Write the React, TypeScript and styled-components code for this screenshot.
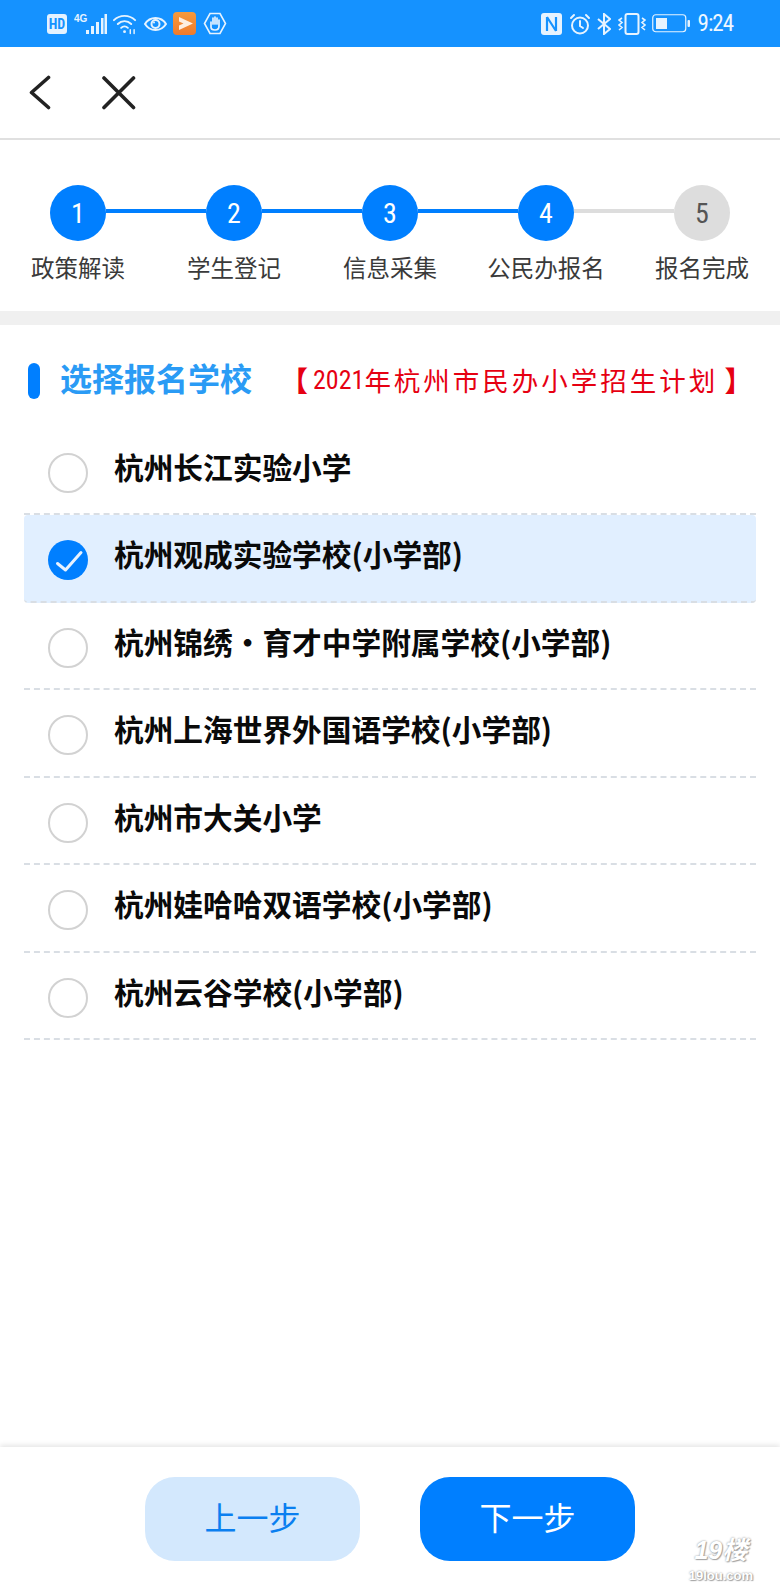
import React, { useState } from 'react';
import styled, { createGlobalStyle } from 'styled-components';

const CJK = `"Noto Sans CJK SC", "Liberation Sans", sans-serif`;
const NARROW = `"Liberation Sans Narrow", "Roboto Condensed", Roboto, sans-serif`;

const GlobalStyle = createGlobalStyle`
  html, body {
    margin: 0;
    padding: 0;
    background: #fff;
  }
`;

const Page = styled.div`
  position: relative;
  width: 780px;
  height: 1591px;
  display: flex;
  flex-direction: column;
  overflow: hidden;
  background: #fff;
  font-family: ${CJK};
`;

const StatusBar = styled.div`
  height: 47px;
  flex: none;
  padding: 0 47px;
  box-sizing: border-box;
  background: #1592ff;
  color: #e6f3ff;
  display: flex;
  align-items: center;
  justify-content: space-between;
`;

const StatusGroup = styled.div`
  display: flex;
  align-items: center;
  gap: 6.5px;
`;

const HdBadge = styled.span`
  width: 20px;
  height: 20px;
  border-radius: 3px;
  background: #e3f2ff;
  color: #1592ff;
  font: bold 14px ${NARROW};
  display: flex;
  align-items: center;
  justify-content: center;
`;

const Clock = styled.span`
  font: 23px ${NARROW};
  letter-spacing: -1px;
  color: #eef7ff;
  margin-left: 1px;
`;

const NavBar = styled.div`
  height: 91px;
  flex: none;
  padding-left: 29px;
  border-bottom: 2px solid #e0e0e0;
  display: flex;
  align-items: center;
  gap: 50px;
`;

const IconButton = styled.button`
  padding: 0;
  border: 0;
  background: none;
  display: flex;
`;

const Stepper = styled.div`
  flex: none;
  padding: 45px 0 27px;
  border-bottom: 14px solid #f0f0f0;
`;

const Track = styled.div`
  padding: 0 50px;
  display: flex;
  align-items: center;
`;

const Dot = styled.div<{ $done: boolean }>`
  width: 56px;
  height: 56px;
  flex: none;
  border-radius: 50%;
  background: ${(p) => (p.$done ? '#007fff' : '#dddddd')};
  color: ${(p) => (p.$done ? '#fff' : '#555')};
  font: 28px ${NARROW};
  display: flex;
  align-items: center;
  justify-content: center;
`;

const Line = styled.div<{ $done: boolean }>`
  flex: 1;
  height: 4px;
  margin-bottom: 4px;
  background: ${(p) => (p.$done ? '#007fff' : '#dddddd')};
`;

const Labels = styled.div`
  margin-top: 9px;
  display: grid;
  grid-template-columns: repeat(5, 156px);
`;

const StepLabel = styled.div`
  font-size: 23.5px;
  line-height: 34px;
  color: #3a3a3a;
  text-align: center;
`;

const SectionHead = styled.div`
  margin: 38px 0 0 28px;
  height: 36px;
  display: flex;
  align-items: center;
`;

const Marker = styled.span`
  width: 12px;
  height: 36px;
  border-radius: 6px;
  background: #007fff;
`;

const Title = styled.h2`
  margin: 0 0 9px 20px;
  font-size: 32px;
  font-weight: 700;
  color: #2a9bf5;
  white-space: nowrap;
`;

const PlanLink = styled.span`
  margin: 0 0 3px 28px;
  display: flex;
  align-items: center;
  font-size: 26.5px;
  letter-spacing: 3px;
  color: #e60012;
  white-space: nowrap;
`;

const Bracket = styled.span<{ $closing?: boolean }>`
  font-size: 28px;
  font-weight: 700;
  letter-spacing: 0;
  margin: ${(p) => (p.$closing ? '0 0 0 6px' : '0 5px 0 0')};
`;

const Digits = styled.span`
  font: 26px ${NARROW};
  letter-spacing: 0;
`;

const SchoolList = styled.div`
  margin: 28.5px 24px 0;
`;

const SchoolRow = styled.div<{ $selected: boolean }>`
  height: 87.5px;
  box-sizing: border-box;
  padding: 19px 0 0 24px;
  border-bottom: 2px dashed #d9dee4;
  border-radius: ${(p) => (p.$selected ? '4px' : '0')};
  background: ${(p) => (p.$selected ? '#e1efff' : 'transparent')};
  display: flex;
  align-items: flex-start;
  gap: 26px;
`;

const Radio = styled.span`
  width: 40px;
  height: 40px;
  margin-top: 6px;
  flex: none;
  box-sizing: border-box;
  border: 2px solid #d2d2d2;
  border-radius: 50%;
  background: #fff;
`;

const Checked = styled.span`
  width: 40px;
  height: 40px;
  margin-top: 6px;
  flex: none;
  display: flex;
`;

const SchoolName = styled.span`
  font-size: 29.7px;
  line-height: 40px;
  font-weight: 700;
  color: #0a0a0a;
`;

const Footer = styled.div`
  margin-top: auto;
  height: 144px;
  flex: none;
  box-sizing: border-box;
  padding-top: 30px;
  box-shadow: 0 -2px 5px rgba(0, 0, 0, 0.1);
  display: flex;
  justify-content: center;
  gap: 60px;
`;

const StepButton = styled.button<{ $primary?: boolean }>`
  width: 215px;
  height: 84px;
  padding: 0 0 6px;
  border: 0;
  border-radius: 30px;
  background: ${(p) => (p.$primary ? '#007fff' : '#d3e8fd')};
  color: ${(p) => (p.$primary ? '#fff' : '#0a7ff0')};
  font-family: ${CJK};
  font-size: 32px;
`;

const Watermark = styled.div`
  position: absolute;
  right: 27px;
  bottom: 8px;
  color: #fff;
  text-align: center;
  text-shadow: 0 0 2px #8a8a8a, 1px 1px 1px #aaa;
`;

const MarkLogo = styled.div`
  font: italic bold 25px/36px "Liberation Sans", ${CJK};
`;

const MarkSite = styled.div`
  font: bold 13px/15px "Liberation Sans", sans-serif;
`;

const steps = ['政策解读', '学生登记', '信息采集', '公民办报名', '报名完成'];
const schools = [
  '杭州长江实验小学',
  '杭州观成实验学校(小学部)',
  '杭州锦绣・育才中学附属学校(小学部)',
  '杭州上海世界外国语学校(小学部)',
  '杭州市大关小学',
  '杭州娃哈哈双语学校(小学部)',
  '杭州云谷学校(小学部)',
];
const CURRENT_STEP = 4;

const SignalIcon = () => (
  <svg width="33" height="22" viewBox="0 0 33 22" fill="currentColor">
    <text x="0" y="9" fontSize="10" fontWeight="700" fontFamily="Liberation Sans">4G</text>
    <rect x="12" y="17" width="3" height="4" />
    <rect x="17" y="13" width="3" height="8" />
    <rect x="22" y="9" width="3" height="12" />
    <rect x="27" y="5" width="2.5" height="16" />
    <rect x="30.5" y="1" width="2.5" height="20" />
  </svg>
);

const WifiIcon = () => (
  <svg width="24" height="22" viewBox="0 0 25 22" fill="none" stroke="currentColor" strokeWidth="2" strokeLinecap="round">
    <path d="M1 7C7 1 17 1 23 7" />
    <path d="M5 11C9 7 15 7 19 11" />
    <path d="M8.5 15C10.5 13 13.5 13 15.5 15" />
    <circle cx="12" cy="19" r="1.5" fill="currentColor" stroke="none" />
    <path d="M18 17V21M22 17V21" strokeWidth="1.5" />
  </svg>
);

const EyeIcon = () => (
  <svg width="23" height="18" viewBox="0 0 23 18" fill="none" stroke="currentColor" strokeWidth="2">
    <path d="M1 9C6 1 17 1 22 9C17 17 6 17 1 9Z" />
    <circle cx="11.5" cy="9" r="4" />
    <circle cx="10" cy="7.5" r="1" fill="currentColor" stroke="none" />
  </svg>
);

const AppIcon = () => (
  <svg width="23" height="23" viewBox="0 0 23 23">
    <defs>
      <linearGradient id="appFill" x1="0" y1="0" x2="0" y2="1">
        <stop offset="0" stopColor="#f79a3c" />
        <stop offset="1" stopColor="#ee7a2c" />
      </linearGradient>
    </defs>
    <rect width="23" height="23" rx="4" fill="url(#appFill)" />
    <path d="M6 5L20 11.5L6 18V13.5L10.5 11.5L6 9.5Z" fill="#fdeee0" />
  </svg>
);

const HandIcon = () => (
  <svg width="24" height="23" viewBox="0 0 24 23" fill="none" stroke="currentColor">
    <path d="M7 1.5H17L22.5 11.5L17 21.5H7L1.5 11.5Z" strokeWidth="1.6" />
    <path d="M8 10V15C8 17 10 18 12 18C15 18 16 16 16 14V8M10 12V6M12 12V5M14 12V6" strokeWidth="1.7" strokeLinecap="round" />
  </svg>
);

const NfcIcon = () => (
  <svg width="21" height="22" viewBox="0 0 21 22">
    <rect width="21" height="22" rx="3" fill="currentColor" />
    <path d="M6 4V18M15 4V18M6 4L15 18" stroke="#1592ff" strokeWidth="2.2" fill="none" />
  </svg>
);

const AlarmIcon = () => (
  <svg width="22" height="22" viewBox="0 0 22 22" fill="none" stroke="currentColor" strokeWidth="2" strokeLinecap="round">
    <circle cx="11" cy="12.5" r="8" />
    <path d="M11 8V13L14 15M2 5L5 2M20 5L17 2" />
  </svg>
);

const BluetoothIcon = () => (
  <svg width="14" height="22" viewBox="0 0 14 22" fill="none" stroke="currentColor" strokeWidth="2">
    <path d="M1 6L13 16L7 21V1L13 6L1 16" />
  </svg>
);

const VibrateIcon = () => (
  <svg width="28" height="22" viewBox="0 0 28 22" fill="none" stroke="currentColor" strokeWidth="1.6">
    <rect x="7.5" y="1" width="13" height="20" rx="2" strokeWidth="2" />
    <path d="M4 5L1 7L4 9.5L1 12L4 14.5L1 17M24 5L27 7L24 9.5L27 12L24 14.5L27 17" />
  </svg>
);

const BatteryIcon = () => (
  <svg width="38" height="19" viewBox="0 0 38 19">
    <rect x="0.75" y="0.75" width="33" height="17" rx="3" fill="none" stroke="currentColor" strokeWidth="1.2" />
    <rect x="4" y="4" width="11" height="11" fill="currentColor" />
    <rect x="35.5" y="6" width="2.5" height="7" rx="1" fill="currentColor" />
  </svg>
);

const BackIcon = () => (
  <svg width="22" height="35" viewBox="0 0 22 35" fill="none" stroke="#222" strokeWidth="3.6" strokeLinecap="round" strokeLinejoin="round">
    <path d="M19.5 2.5L2.5 17.5L19.5 32.5" />
  </svg>
);

const CloseIcon = () => (
  <svg width="35" height="35" viewBox="0 0 35 35" fill="none" stroke="#222" strokeWidth="3.6" strokeLinecap="round">
    <path d="M3 3L32.5 32.5M32.5 3L3 32.5" />
  </svg>
);

const CheckIcon = () => (
  <svg width="40" height="40" viewBox="0 0 40 40">
    <circle cx="20" cy="20" r="20" fill="#007fff" />
    <path d="M9.5 23.5L17.5 30L33 12.5" fill="none" stroke="#e8f2ff" strokeWidth="3" strokeLinecap="round" strokeLinejoin="round" />
  </svg>
);

const App = () => {
  const [selected, setSelected] = useState(1);

  return (
    <Page>
      <GlobalStyle />
      <StatusBar>
        <StatusGroup>
          <HdBadge>HD</HdBadge>
          <SignalIcon />
          <WifiIcon />
          <EyeIcon />
          <AppIcon />
          <HandIcon />
        </StatusGroup>
        <StatusGroup>
          <NfcIcon />
          <AlarmIcon />
          <BluetoothIcon />
          <VibrateIcon />
          <BatteryIcon />
          <Clock>9:24</Clock>
        </StatusGroup>
      </StatusBar>

      <NavBar>
        <IconButton><BackIcon /></IconButton>
        <IconButton><CloseIcon /></IconButton>
      </NavBar>

      <Stepper>
        <Track>
          {steps.map((_, i) => (
            <React.Fragment key={i}>
              {i > 0 && <Line $done={i < CURRENT_STEP} />}
              <Dot $done={i < CURRENT_STEP}>{i + 1}</Dot>
            </React.Fragment>
          ))}
        </Track>
        <Labels>
          {steps.map((s) => (
            <StepLabel key={s}>{s}</StepLabel>
          ))}
        </Labels>
      </Stepper>

      <SectionHead>
        <Marker />
        <Title>选择报名学校</Title>
        <PlanLink>
          <Bracket>【</Bracket>
          <Digits>2021</Digits>年杭州市民办小学招生计划
          <Bracket $closing>】</Bracket>
        </PlanLink>
      </SectionHead>

      <SchoolList>
        {schools.map((name, i) => (
          <SchoolRow key={name} $selected={i === selected} onClick={() => setSelected(i)}>
            {i === selected ? <Checked><CheckIcon /></Checked> : <Radio />}
            <SchoolName>{name}</SchoolName>
          </SchoolRow>
        ))}
      </SchoolList>

      <Footer>
        <StepButton>上一步</StepButton>
        <StepButton $primary>下一步</StepButton>
      </Footer>

      <Watermark>
        <MarkLogo>19楼</MarkLogo>
        <MarkSite>19lou.com</MarkSite>
      </Watermark>
    </Page>
  );
};

export default App;
